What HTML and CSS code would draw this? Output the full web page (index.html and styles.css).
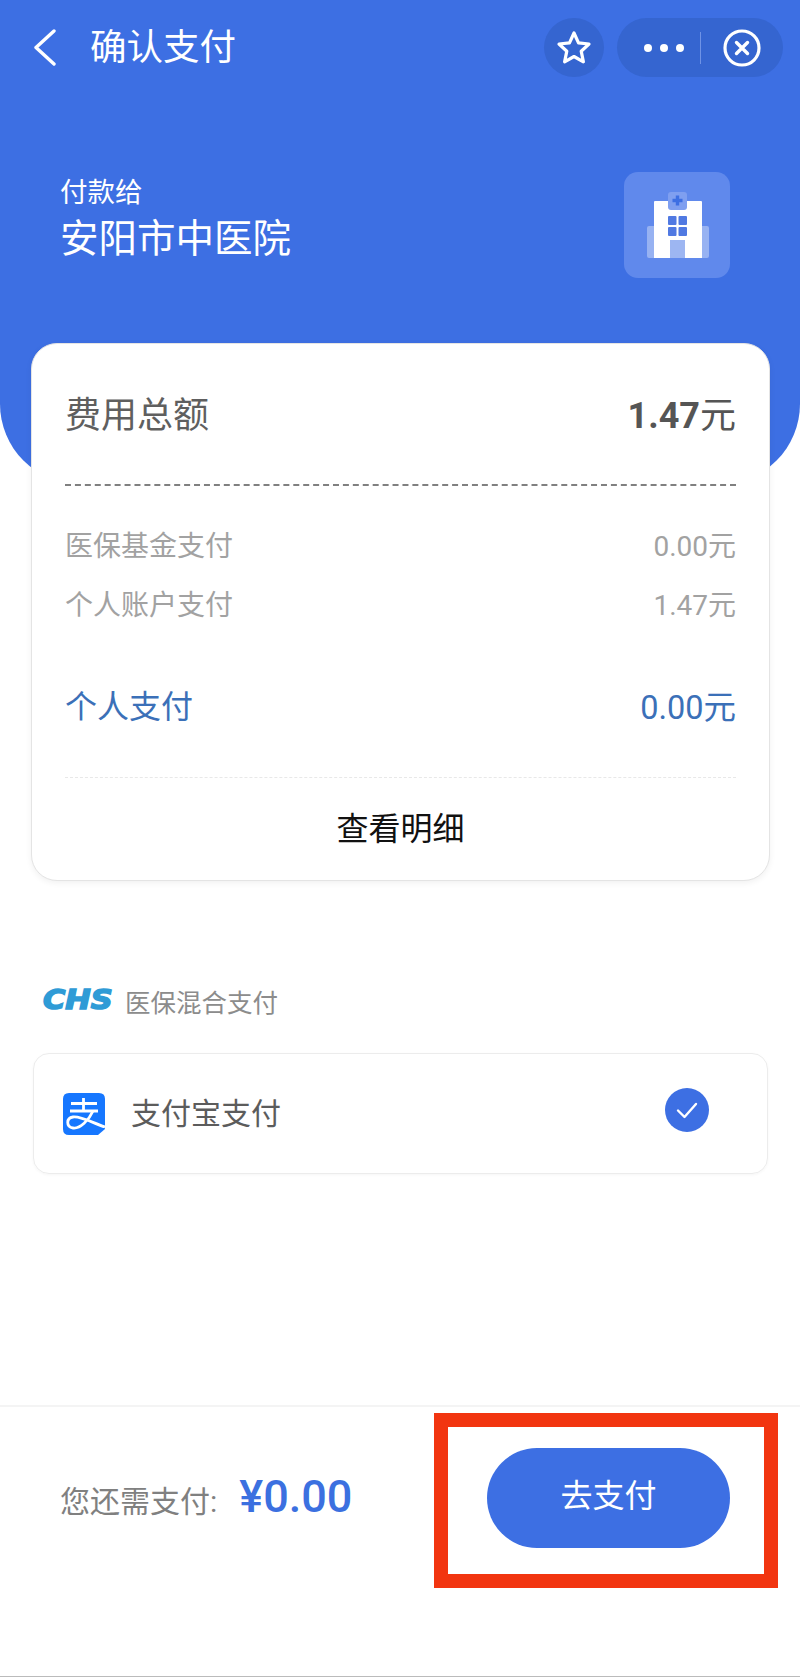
FILE: index.html
```html
<!DOCTYPE html>
<html lang="zh-CN">
<head>
<meta charset="utf-8">
<title>确认支付</title>
<link rel="stylesheet" href="styles.css">
</head>
<body>
<div class="page">
  <header class="hero">
    <div class="nav">
      <svg class="back" width="24" height="37" viewBox="0 0 24 37"><path d="M21 2 L3 18.5 L21 35" fill="none" stroke="#fff" stroke-width="3.4" stroke-linecap="round" stroke-linejoin="round"/></svg>
      <div class="nav-title">确认支付</div>
      <div class="star-btn">
        <svg width="36" height="36" viewBox="0 0 36 36"><path d="M18 3 L22.500 12.800 L33 14 L25.200 21.200 L27.400 31.800 L18 26.500 L8.600 31.800 L10.800 21.200 L3 14 L13.500 12.800 Z" fill="none" stroke="#fff" stroke-width="3.2" stroke-linejoin="round"/></svg>
      </div>
      <div class="capsule">
        <div class="dots"><i></i><i></i><i></i></div>
        <div class="cap-line"></div>
        <svg width="40" height="40" viewBox="0 0 40 40"><circle cx="20" cy="20" r="17" fill="none" stroke="#fff" stroke-width="3.2"/><path d="M14.5 14.5 L25.5 25.5 M25.5 14.5 L14.5 25.5" stroke="#fff" stroke-width="3.4" stroke-linecap="round"/></svg>
      </div>
    </div>
    <div class="merchant">
      <div class="merchant-text">
        <div class="pay-to">付款给</div>
        <div class="merchant-name">安阳市中医院</div>
      </div>
      <div class="tile">
        <svg width="106" height="106" viewBox="0 0 106 106">
          <rect x="23" y="54" width="62" height="32" rx="2" fill="#fff" fill-opacity=".35"/>
          <path d="M30 30 Q30 29 31 29 H77 Q78 29 78 30 V86 H30 Z" fill="#fff"/>
          <rect x="44" y="20" width="19" height="18" rx="3" fill="#7f9ff0"/>
          <path d="M53.5 23.500 V33.500 M48.500 28.500 H58.500" stroke="#3d6fe3" stroke-width="3.4"/>
          <rect x="44" y="44" width="8.500" height="9" rx="1" fill="#5079e2"/>
          <rect x="54.500" y="44" width="8.500" height="9" rx="1" fill="#5079e2"/>
          <rect x="44" y="55" width="8.500" height="9" rx="1" fill="#5079e2"/>
          <rect x="54.500" y="55" width="8.500" height="9" rx="1" fill="#5079e2"/>
          <rect x="46" y="68" width="15" height="18" fill="#9db6f2"/>
        </svg>
      </div>
    </div>
  </header>

  <section class="card">
    <div class="row row-total"><span>费用总额</span><span class="total-num">1.47<span class="unit">元</span></span></div>
    <div class="dash"></div>
    <div class="details">
      <div class="row row-detail"><span>医保基金支付</span><span class="num">0.00元</span></div>
      <div class="row row-detail"><span>个人账户支付</span><span class="num">1.47元</span></div>
    </div>
    <div class="row row-own"><span>个人支付</span><span class="num">0.00元</span></div>
    <div class="dash-light"></div>
    <div class="more">查看明细</div>
  </section>

  <div class="section-label">
    <span class="chs">CHS</span>
    <span class="section-text">医保混合支付</span>
  </div>

  <section class="method">
    <svg class="alipay" width="42" height="42" viewBox="0 0 42 42">
      <path d="M6 0 H36 Q42 0 42 6 V36 L35 42 H6 Q0 42 0 36 V6 Q0 0 6 0 Z" fill="#1677ff"/>
      <path d="M8 10.500 H34 M20.500 5 V18 M7 18 H35" fill="none" stroke="#fff" stroke-width="2.800"/>
      <path d="M30 18 C26 27 17 36 10 35 C3 34 3 25 10 24 C18 23 30 30 42 34" fill="none" stroke="#fff" stroke-width="2.800"/>
    </svg>
    <span class="method-name">支付宝支付</span>
    <span class="check">
      <svg width="44" height="44" viewBox="0 0 44 44"><path d="M13 22.500 L19.500 29 L31 16" fill="none" stroke="#fff" stroke-width="2.400" stroke-linecap="round" stroke-linejoin="round"/></svg>
    </span>
  </section>

  <footer class="footer">
    <div class="due"><span class="due-label">您还需支付:</span><span class="due-amount">¥0.00</span></div>
    <div class="pay-btn">去支付</div>
    <div class="mark"></div>
  </footer>
</div>
</body>
</html>
```
FILE: styles.css
```css
* { box-sizing: border-box; }
html, body { margin: 0; padding: 0; background: #fff; }
body { font-family: Roboto, "Noto Sans CJK SC", sans-serif; }
.page { width: 800px; height: 1677px; display: flex; flex-direction: column; overflow: hidden; }

.hero { height: 484px; flex: none; background: #3d6fe3; border-radius: 0 0 80px 80px; padding: 18px 17px 0 33px; color: #fff; }
.nav { display: flex; align-items: center; height: 59px; }
.back { flex: none; }
.nav-title { margin-left: 33px; font-size: 36.500px; line-height: 59px; flex: 1; }
.star-btn { width: 60px; height: 59px; border-radius: 50%; background: #3565d0; display: flex; align-items: center; justify-content: center; }
.capsule { width: 166px; height: 59px; margin-left: 13px; border-radius: 30px; background: #3565d0; display: flex; align-items: center; padding-left: 27px; }
.dots { display: flex; gap: 8px; }
.dots i { width: 8px; height: 8px; border-radius: 50%; background: #fff; display: block; }
.cap-line { width: 1px; height: 32px; background: #6f93e6; margin-left: 16px; margin-right: 21px; }

.merchant { display: flex; justify-content: space-between; align-items: flex-start; margin-top: 95px; padding: 0 53px 0 27px; }
.merchant-text { padding-top: 3px; }
.pay-to { font-size: 27.500px; line-height: 36px; }
.merchant-name { font-size: 38.500px; line-height: 56px; }
.tile { width: 106px; height: 106px; border-radius: 14px; background: #6089ec; }
.tile svg { display: block; }

.card { position: relative; margin: -141px 30px 0 31px; height: 538px; background: #fff; border-radius: 26px; border: 1px solid #e4e4e4; box-shadow: 0 2px 6px rgba(0,0,0,.06); padding: 0 33px; flex: none; }
.row { display: flex; justify-content: space-between; align-items: center; }
.row-total { height: 140px; padding-bottom: 5px; font-size: 36px; color: #5f5f5f; }
.total-num { font-weight: 700; color: #555; }
.unit { font-weight: 400; }
.dash { border-top: 2px dashed #808080; }
.details { margin-top: 28px; }
.row-detail { height: 59px; font-size: 28px; color: #a2a2a2; }
.row-own { height: 60px; margin-top: 42px; font-size: 32px; color: #3b70b8; }
.row-own .num { font-size: 32.500px; }
.dash-light { border-top: 1px dashed #e8e8e8; margin-top: 43px; }
.more { height: 100px; line-height: 103px; text-align: center; font-size: 32px; color: #111; }

.section-label { display: flex; align-items: center; height: 40px; margin: 99px 0 0 43px; flex: none; }
.chs { font-family: "DejaVu Sans", sans-serif; font-weight: 700; font-style: italic; font-size: 26px; line-height: 34px; color: #2f9bd6; -webkit-text-stroke: 1.5px #2f9bd6; width: 82px; display: inline-block; transform: scaleX(1.17); transform-origin: left center; }
.section-text { font-size: 25.500px; color: #8c8c8c; }

.method { display: flex; align-items: center; height: 121px; margin: 33px 32px 0 33px; padding-left: 29px; border: 1px solid #ececec; border-radius: 16px; box-shadow: 0 1px 3px rgba(0,0,0,.04); flex: none; }
.alipay { flex: none; }
.method-name { margin-left: 26px; padding-bottom: 6px; font-size: 30px; color: #5c5c5c; flex: 1; }
.check { width: 44px; height: 44px; border-radius: 50%; background: #3d6fe3; margin: 0 58px 8px 0; display: block; }
.check svg { display: block; }

.footer { position: relative; margin-top: auto; height: 272px; flex: none; border-top: 2px solid #f4f4f4; border-bottom: 1px solid #bbb; padding: 41px 70px 0 60px; display: flex; justify-content: space-between; align-items: flex-start; }
.due { display: flex; align-items: baseline; gap: 22px; height: 100px; padding-top: 22px; }
.due-label { font-size: 30px; color: #808080; }
.due-amount { font-size: 45px; font-weight: 500; color: #3b70e0; }
.pay-btn { width: 243px; height: 100px; border-radius: 50px; background: #3d6fe3; color: #fff; font-size: 32px; line-height: 96px; text-align: center; }
.mark { position: absolute; left: 434px; top: 6px; width: 344px; height: 175px; border: 14px solid #f23510; }
```
